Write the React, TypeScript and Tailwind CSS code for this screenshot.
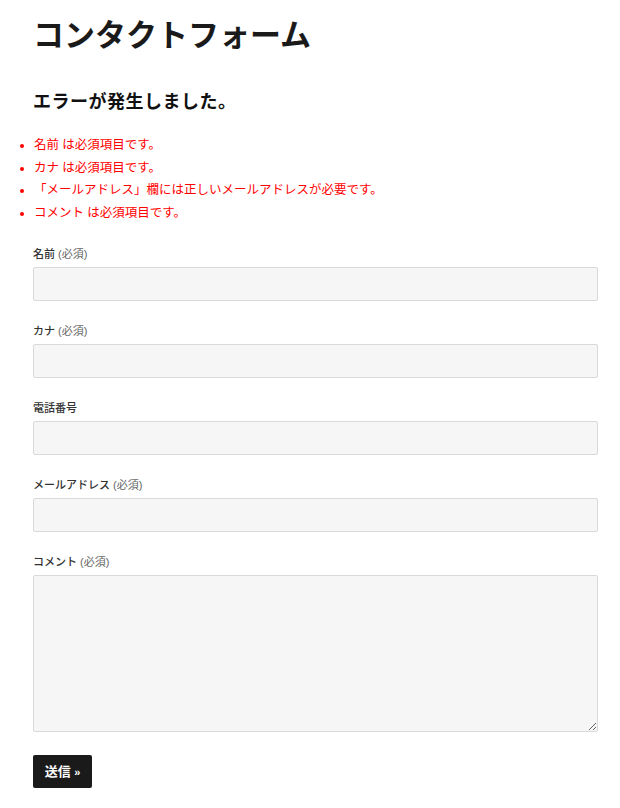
import React from 'react';

const fields = [
  { id: 'name', label: '名前', required: true },
  { id: 'kana', label: 'カナ', required: true },
  { id: 'tel', label: '電話番号', required: false },
  { id: 'email', label: 'メールアドレス', required: true },
];

const errors = [
  '名前 は必須項目です。',
  'カナ は必須項目です。',
  '「メールアドレス」欄には正しいメールアドレスが必要です。',
  'コメント は必須項目です。',
];

const sans = "font-['Liberation_Sans','Noto_Sans_CJK_JP',sans-serif]";

function Label({ text, required }: { text: string; required: boolean }) {
  return (
    <label className={`block text-[11px] leading-[16px] font-medium text-[#333] mb-[5px] ${sans}`}>
      {text}
      {required && <span className="font-normal text-[#666]"> (必須)</span>}
    </label>
  );
}

export default function App() {
  return (
    <div className="min-h-[808px] bg-white pt-[16px] pl-[33px] pr-[22px] pb-[20px]">
      <h1 className={`text-[31px] leading-[40px] font-bold text-[#1a1a1a] ${sans}`}>コンタクトフォーム</h1>

      <h2 className="mt-[34px] text-[18px] leading-[24px] font-bold tracking-[0.5px] text-[#111] font-['Liberation_Serif','Noto_Sans_CJK_JP',serif]">
        エラーが発生しました。
      </h2>

      {/* validation messages */}
      <ul className="mt-[20px] -ml-[33px] pl-[34px] list-disc text-[#ff0000] text-[12.5px] leading-[22.5px] font-['Liberation_Serif','Noto_Sans_CJK_JP',serif]">
        {errors.map((e) => (
          <li key={e}>{e}</li>
        ))}
      </ul>

      <form className="mt-[22px]" onSubmit={(e) => e.preventDefault()}>
        {fields.map((f) => (
          <div key={f.id} className="mb-[22px]">
            <Label text={f.label} required={f.required} />
            <input
              type="text"
              className="block w-full h-[34px] bg-[#f6f6f6] border border-[#d9d9d9] rounded-[2px] outline-none"
            />
          </div>
        ))}

        <div className="mb-[23px]">
          <Label text="コメント" required />
          <textarea className="block w-full h-[157px] bg-[#f6f6f6] border border-[#d9d9d9] rounded-[2px] outline-none" />
        </div>

        <button
          type="submit"
          className={`h-[33px] w-[59px] bg-[#1a1a1a] text-white text-[13px] font-bold rounded-[2px] ${sans}`}
        >
          送信 <span className="text-[11px]">»</span>
        </button>
      </form>
    </div>
  );
}
